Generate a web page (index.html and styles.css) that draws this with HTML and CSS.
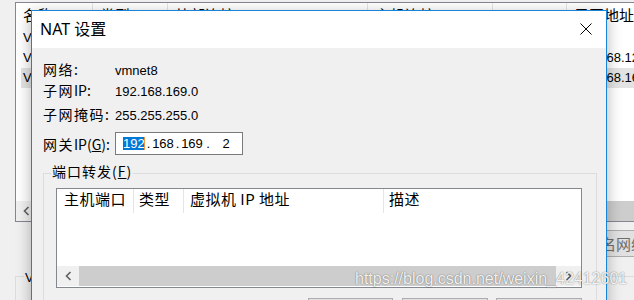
FILE: index.html
```html
<!DOCTYPE html>
<html lang="zh-CN">
<head>
<meta charset="utf-8">
<title>NAT 设置</title>
<link rel="stylesheet" href="styles.css">
</head>
<body>
<div class="desk">
  <div class="bgwin">
    <div class="blist">
      <div class="bhead">
        <div class="bh c1">名称</div>
        <div class="bh c2">类型</div>
        <div class="bh c3">外部连接</div>
        <div class="bh c4">主机连接</div>
        <div class="bh c5">DHCP</div>
        <div class="bh c6">子网地址</div>
      </div>
      <div class="brow">
        <div class="bc r1">VMnet0</div><div class="bc c2"></div><div class="bc c3"></div><div class="bc c4"></div><div class="bc c5"></div><div class="bc c6"></div>
      </div>
      <div class="brow">
        <div class="bc r1">VMnet1</div><div class="bc c2"></div><div class="bc c3"></div><div class="bc c4"></div><div class="bc c5"></div><div class="bc c6">192.168.126.0</div>
      </div>
      <div class="brow sel">
        <div class="bc r1">VMnet8</div><div class="bc c2"></div><div class="bc c3"></div><div class="bc c4"></div><div class="bc c5"></div><div class="bc c6">192.168.169.0</div>
      </div>
      <div class="bscroll">
        <div class="bsbtn"><svg width="7" height="10" viewBox="0 0 7 10"><path d="M5.5 1 L1.5 5 L5.5 9" fill="none" stroke="#606060" stroke-width="1.6"/></svg></div>
        <div class="bsthumb"></div>
      </div>
    </div>
    <div class="bbar"><div class="bbutton">重命名网络(W)...</div></div>
    <div class="bgroup"><div class="blegend">VMnet 信息</div></div>
  </div>

  <div class="dlg">
    <div class="tbar">
      <span class="ttl">NAT 设置</span>
      <svg class="close" width="12" height="12" viewBox="0 0 12 12"><path d="M0.5 0.5 L11.5 11.5 M11.5 0.5 L0.5 11.5" stroke="#000" stroke-width="1" fill="none"/></svg>
    </div>
    <div class="dbody">
      <div class="info">
        <div class="row ra"><span class="lab"><span class="zh">网络</span>:</span><span class="val">vmnet8</span></div>
        <div class="row rb"><span class="lab"><span class="zh">子网</span>IP:</span><span class="val">192.168.169.0</span></div>
        <div class="row rc"><span class="lab"><span class="zh">子网掩码</span>:</span><span class="val">255.255.255.0</span></div>
        <div class="row rd"><span class="lab"><span class="zh">网关</span>IP(<u>G</u>):</span>
          <div class="ipbox">
            <span class="f f1">192</span><span class="f d1">.</span><span class="f f2">168</span><span class="f d2">.</span><span class="f f3">169</span><span class="f d3">.</span><span class="f f4">2</span>
          </div>
        </div>
      </div>
      <div class="group">
        <div class="legend">端口转发(<u>F</u>)</div>
        <div class="lv">
          <div class="lvhead">
            <div class="lh h1">主机端口</div>
            <div class="lh h2">类型</div>
            <div class="lh h3">虚拟机 IP 地址</div>
            <div class="lh h4">描述</div>
          </div>
          <div class="hs">
            <div class="hsbtn"><svg width="7" height="10" viewBox="0 0 7 10"><path d="M5.5 1 L1.5 5 L5.5 9" fill="none" stroke="#606060" stroke-width="1.6"/></svg></div>
            <div class="hsthumb"></div>
            <div class="hsbtn r"><svg width="7" height="10" viewBox="0 0 7 10"><path d="M1.5 1 L5.5 5 L1.5 9" fill="none" stroke="#606060" stroke-width="1.6"/></svg></div>
          </div>
        </div>
        <div class="btns">
          <div class="btn b1">添加(A)...</div>
          <div class="btn b2">移除(R)</div>
          <div class="btn b3">属性(P)...</div>
        </div>
      </div>
    </div>
  </div>

  <div class="wm">https://blog.csdn.net/weixin_42412601</div>
</div>
</body>
</html>
```

FILE: styles.css
```css
html, body {
  margin: 0;
  padding: 0;
}
body {
  width: 634px;
  height: 300px;
  overflow: hidden;
  background: #f0f0f0;
}
.desk {
  position: relative;
  width: 634px;
  height: 300px;
  overflow: hidden;
}

/* background window */
.bgwin {
  position: absolute;
  left: 0;
  top: 0;
  width: 634px;
  height: 300px;
  box-sizing: border-box;
  padding: 2px 0 0 15px;
  background: #f0f0f0;
  font: 13px "Liberation Sans", "Noto Sans CJK SC", sans-serif;
  color: #000;
  overflow: hidden;
}
.blist {
  width: 720px;
  height: 220px;
  box-sizing: border-box;
  border: 1px solid #828790;
  border-right: none;
  background: #fff;
  display: flex;
  flex-direction: column;
}
.bhead {
  display: flex;
  height: 25px;
  flex: none;
}
.bh {
  box-sizing: border-box;
  border-right: 1px solid #e5e5e5;
  padding: 4px 0 0 7px;
  font-family: "Noto Sans CJK SC", sans-serif;
  font-size: 15px;
  line-height: 16px;
  white-space: nowrap;
  flex: none;
}
.bh.c1 { width: 77px; }
.c2 { width: 75px; }
.c3 { width: 200px; }
.c4 { width: 125px; }
.c5 { width: 74px; }
.c6 { width: 160px; }
.brow {
  display: flex;
  height: 20px;
  line-height: 20px;
  margin-left: 5px;
  white-space: nowrap;
  flex: none;
}
.brow.sel { background: #e3e3e3; }
.bc {
  box-sizing: border-box;
  padding-left: 7px;
  overflow: hidden;
  flex: none;
}
.bc.r1 { width: 72px; padding-left: 2px; }
.bscroll {
  margin-top: auto;
  height: 20px;
  display: flex;
  flex: none;
}
.bsbtn {
  width: 20px;
  background: #f0f0f0;
  display: flex;
  align-items: center;
  justify-content: center;
}
.bsthumb {
  flex: 1;
  background: #cdcdcd;
}
.bbar {
  display: flex;
  padding-left: 547px;
  margin-top: 8px;
}
.bbutton {
  height: 27px;
  box-sizing: border-box;
  border: 1px solid #adadad;
  background: #e1e1e1;
  color: #6d6d6d;
  font-family: "Noto Sans CJK SC", sans-serif;
  font-size: 15px;
  line-height: 25px;
  padding: 0 8px;
  white-space: nowrap;
}
.bgroup {
  margin-top: 19px;
  width: 700px;
  height: 60px;
  box-sizing: border-box;
  border-top: 1px solid #dcdcdc;
  border-left: 1px solid #dcdcdc;
}
.blegend {
  width: fit-content;
  margin: -7px 0 0 8px;
  padding: 0 1px;
  background: #f0f0f0;
  line-height: 16px;
}

/* dialog */
.dlg {
  position: absolute;
  left: 31px;
  top: 10px;
  width: 576px;
  height: 300px;
  box-sizing: border-box;
  border: 1px solid #1883d7;
  background: #f0f0f0;
  box-shadow: 0 4px 14px rgba(0, 0, 0, 0.3);
  font-family: "Liberation Sans", "Noto Sans CJK SC", sans-serif;
  color: #000;
}
.tbar {
  height: 37px;
  box-sizing: border-box;
  background: #fff;
  display: flex;
  align-items: center;
  justify-content: space-between;
  padding: 0 14px 2px 8px;
}
.ttl {
  font: 16px/20px "Noto Sans", "Noto Sans CJK SC", sans-serif;
  white-space: nowrap;
}
.close { display: block; }
.dbody {
  padding: 13px 0 0 11px;
}
.row {
  display: flex;
  align-items: baseline;
}
.ra { height: 21px; }
.rb { height: 24px; }
.rc { height: 26px; }
.rd { height: 23px; align-items: center; }
.lab {
  width: 72px;
  flex: none;
  font-family: "Noto Sans CJK SC", sans-serif;
  font-size: 14px;
  line-height: 16px;
  white-space: nowrap;
}
.zh { letter-spacing: 1.5px; }
.val {
  font-size: 13px;
  line-height: 16px;
}
.ipbox {
  width: 128px;
  height: 23px;
  box-sizing: border-box;
  border: 1px solid #7a7a7a;
  background: #fff;
  display: flex;
  align-items: center;
  padding-left: 7px;
  font-size: 13px;
  line-height: 13px;
}
.f {
  display: block;
  height: 13px;
  text-align: center;
  box-sizing: border-box;
  flex: none;
}
.f1 {
  width: 22px;
  background: #0078d7;
  color: #fff;
  border-right: 1px solid #f0923a;
}
.f2, .f3 { width: 22px; }
.f4 { width: 26px; }
.d1, .d2 { width: 7px; }
.d3 { width: 10px; }

.group {
  margin-top: 18px;
  width: 554px;
  height: 200px;
  box-sizing: border-box;
  border: 1px solid #dcdcdc;
  border-bottom: none;
}
.legend {
  width: fit-content;
  margin: -11px 0 0 7px;
  padding: 0 1px;
  background: #f0f0f0;
  font-family: "Noto Sans CJK SC", sans-serif;
  font-size: 14px;
  letter-spacing: 1px;
  line-height: 16px;
  white-space: nowrap;
}
.lv {
  margin: 9px 0 0 12px;
  width: 526px;
  height: 100px;
  box-sizing: border-box;
  border: 1px solid #828790;
  background: #fff;
  display: flex;
  flex-direction: column;
}
.lvhead {
  display: flex;
  height: 24px;
  flex: none;
}
.lh {
  box-sizing: border-box;
  border-right: 1px solid #e5e5e5;
  padding: 2px 0 0 7px;
  font-family: "Noto Sans CJK SC", sans-serif;
  font-size: 15px;
  letter-spacing: 0.5px;
  line-height: 16px;
  white-space: nowrap;
  flex: none;
}
.h1 { width: 77px; }
.h2 { width: 50px; padding-left: 5px; }
.h3 { width: 200px; padding-left: 6px; }
.h4 { flex: 1; border-right: none; padding-left: 5px; }
.hs {
  margin-top: auto;
  margin-bottom: 1px;
  height: 20px;
  display: flex;
  flex: none;
}
.hsbtn {
  width: 22px;
  background: #f0f0f0;
  display: flex;
  align-items: center;
  justify-content: center;
  flex: none;
}
.hsbtn.r { flex: 1; }
.hsthumb {
  width: 477px;
  flex: none;
  background: #cdcdcd;
}
.btns {
  display: flex;
  justify-content: flex-end;
  margin: 10px 0 0 12px;
  width: 526px;
}
.btn {
  height: 24px;
  box-sizing: border-box;
  border: 1px solid #adadad;
  background: #e1e1e1;
  font-family: "Noto Sans CJK SC", sans-serif;
  font-size: 14px;
  line-height: 22px;
  text-align: center;
  white-space: nowrap;
}
.b1 { width: 85px; margin-right: 9px; }
.b2 { width: 86px; margin-right: 8px; }
.b3 { width: 86px; }

/* watermark */
.wm {
  position: absolute;
  left: 355px;
  top: 270px;
  font: 16px/18px "Liberation Sans", sans-serif;
  color: rgba(255, 255, 255, 0.92);
  text-shadow: 0 0 1px rgba(0, 0, 0, 0.45), 0 0 2px rgba(0, 0, 0, 0.2);
  white-space: nowrap;
}
```
